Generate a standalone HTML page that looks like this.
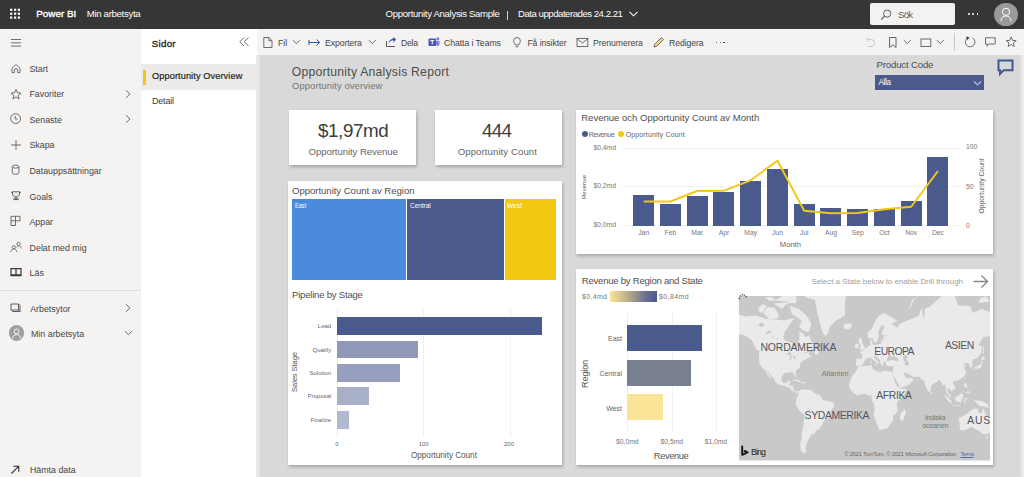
<!DOCTYPE html>
<html><head><meta charset="utf-8">
<style>
*{margin:0;padding:0;box-sizing:border-box}
html,body{width:1024px;height:477px;overflow:hidden;background:#d9d9d9;font-family:"Liberation Sans",sans-serif;position:relative}
.a{position:absolute;display:block}
.t{position:absolute;white-space:nowrap;line-height:1}
.card{position:absolute;background:#fff;box-shadow:1px 2px 3px rgba(0,0,0,.24)}
</style></head><body>

<div class="a" style="left:0px;top:0px;width:1024px;height:29px;background:#363636;"></div>
<svg class="a" style="left:0px;top:0px;" width="30" height="29" viewBox="0 0 30 29"><rect x="10.10" y="8.70" width="2.2" height="2.2" fill="#fff"/><rect x="10.10" y="12.60" width="2.2" height="2.2" fill="#fff"/><rect x="10.10" y="16.50" width="2.2" height="2.2" fill="#fff"/><rect x="14.00" y="8.70" width="2.2" height="2.2" fill="#fff"/><rect x="14.00" y="12.60" width="2.2" height="2.2" fill="#fff"/><rect x="14.00" y="16.50" width="2.2" height="2.2" fill="#fff"/><rect x="17.80" y="8.70" width="2.2" height="2.2" fill="#fff"/><rect x="17.80" y="12.60" width="2.2" height="2.2" fill="#fff"/><rect x="17.80" y="16.50" width="2.2" height="2.2" fill="#fff"/></svg>
<div class="t" style="left:36.30px;top:9.20px;font-size:9.8px;color:#fff;letter-spacing:0.034px;-webkit-text-stroke:0.35px #fff">Power BI</div>
<div class="t" style="left:86.70px;top:9.07px;font-size:9.6px;color:#fff;letter-spacing:-0.302px;">Min arbetsyta</div>
<div class="t" style="left:385.60px;top:9.47px;font-size:9.6px;color:#fff;letter-spacing:-0.320px;">Opportunity Analysis Sample</div>
<div class="a" style="left:506.5px;top:11px;width:1px;height:9px;background:#d0d0d0;"></div>
<div class="t" style="left:518.00px;top:9.47px;font-size:9.6px;color:#fff;letter-spacing:-0.473px;">Data uppdaterades 24.2.21</div>
<svg class="a" style="left:627px;top:9px;" width="13" height="10" viewBox="0 0 13 10"><path d="M2.5 2.8 L6.5 6.8 L10.5 2.8" fill="none" stroke="#fff" stroke-width="1.1"/></svg>
<div class="a" style="left:870px;top:3px;width:85px;height:22px;background:#f3f2f1;border-radius:2px"></div>
<svg class="a" style="left:879px;top:8px;" width="14" height="14" viewBox="0 0 14 14"><circle cx="8.2" cy="5.6" r="3.6" fill="none" stroke="#605e5c" stroke-width="1"/><path d="M5.6 8.2 L2.3 11.5" stroke="#605e5c" stroke-width="1.1"/></svg>
<div class="t" style="left:898.00px;top:10.07px;font-size:9.6px;color:#605e5c;letter-spacing:-0.771px;">Sök</div>
<div class="a" style="left:968.0px;top:13.2px;width:1.6px;height:1.6px;background:#fff;border-radius:1px"></div>
<div class="a" style="left:972.4000000000001px;top:13.2px;width:1.6px;height:1.6px;background:#fff;border-radius:1px"></div>
<div class="a" style="left:976.8000000000001px;top:13.2px;width:1.6px;height:1.6px;background:#fff;border-radius:1px"></div>
<div class="a" style="left:994.3px;top:2.5px;width:23.5px;height:23.5px;border-radius:50%;background:#9a9a9a"></div>
<svg class="a" style="left:994px;top:2px;" width="24" height="24" viewBox="0 0 24 24"><circle cx="12" cy="9.8" r="3.6" fill="none" stroke="#fff" stroke-width="1"/><path d="M6.8 19.2 C7.3 15.5 9.2 14 12 14 C14.8 14 16.7 15.5 17.2 19.2" fill="none" stroke="#fff" stroke-width="1"/></svg>
<div class="a" style="left:0px;top:29px;width:141px;height:448px;background:#f4f3f2;"></div>
<svg class="a" style="left:8px;top:36px;" width="16" height="14" viewBox="0 0 16 14"><path d="M3 3.5 H13 M3 6.8 H13 M3 10.1 H13" stroke="#605e5c" stroke-width="0.9"/></svg>
<div class="t" style="left:29.40px;top:64.50px;font-size:8.85px;color:#464544;">Start</div>
<div class="t" style="left:29.40px;top:90.10px;font-size:8.85px;color:#464544;">Favoriter</div>
<div class="t" style="left:29.40px;top:115.70px;font-size:8.85px;color:#464544;">Senaste</div>
<div class="t" style="left:29.40px;top:141.30px;font-size:8.85px;color:#464544;">Skapa</div>
<div class="t" style="left:29.40px;top:166.90px;font-size:8.85px;color:#464544;">Datauppsättningar</div>
<div class="t" style="left:29.40px;top:192.50px;font-size:8.85px;color:#464544;">Goals</div>
<div class="t" style="left:29.40px;top:218.10px;font-size:8.85px;color:#464544;">Appar</div>
<div class="t" style="left:29.60px;top:243.70px;font-size:8.85px;color:#464544;">Delat med mig</div>
<div class="t" style="left:29.60px;top:269.30px;font-size:8.85px;color:#464544;">Läs</div>
<div class="t" style="left:30.20px;top:305.10px;font-size:8.85px;color:#464544;">Arbetsytor</div>
<div class="t" style="left:31.00px;top:330.30px;font-size:8.85px;color:#464544;">Min arbetsyta</div>
<div class="t" style="left:29.90px;top:466.40px;font-size:8.85px;color:#464544;">Hämta data</div>
<svg class="a" style="left:7px;top:60px;" width="18" height="16" viewBox="0 0 18 16"><path d="M5 8.3 L9 4.4 L13 8.3 V12.6 H10.7 V10.2 A1.7 1.7 0 0 0 7.3 10.2 V12.6 H5 Z" fill="none" stroke="#605e5c" stroke-width="0.9" stroke-linejoin="round"/></svg>
<svg class="a" style="left:7px;top:86px;" width="18" height="16" viewBox="0 0 18 16"><path d="M9 3.4 L10.4 6.8 L13.9 7.1 L11.2 9.4 L12.1 12.9 L9 11 L5.9 12.9 L6.8 9.4 L4.1 7.1 L7.6 6.8 Z" fill="none" stroke="#605e5c" stroke-width="0.9" stroke-linejoin="round"/></svg>
<svg class="a" style="left:7px;top:111px;" width="18" height="16" viewBox="0 0 18 16"><circle cx="8.6" cy="7.6" r="4.9" fill="none" stroke="#605e5c" stroke-width="0.9"/><path d="M8.2 4.9 V8 H10.6" fill="none" stroke="#605e5c" stroke-width="0.9"/></svg>
<svg class="a" style="left:7px;top:137px;" width="18" height="16" viewBox="0 0 18 16"><path d="M9 3.2 V12.8 M4 8 H14" stroke="#605e5c" stroke-width="0.9"/></svg>
<svg class="a" style="left:7px;top:162px;" width="18" height="16" viewBox="0 0 18 16"><ellipse cx="8.6" cy="4.6" rx="3.3" ry="1.5" fill="none" stroke="#605e5c" stroke-width="0.9"/><path d="M5.3 4.6 V10.8 A3.3 1.5 0 0 0 11.9 10.8 V4.6" fill="none" stroke="#605e5c" stroke-width="0.9"/></svg>
<svg class="a" style="left:7px;top:188px;" width="18" height="16" viewBox="0 0 18 16"><path d="M5.5 3.8 H12.5 V5.8 C12.5 8 11 9 9 9 C7 9 5.5 8 5.5 5.8 Z M4 4.3 H5.5 M12.5 4.3 H14 M9 9 V10.2 M6.5 11.6 H11.5 L10.5 10.2 H7.5 Z" fill="none" stroke="#605e5c" stroke-width="1"/></svg>
<svg class="a" style="left:7px;top:214px;" width="18" height="16" viewBox="0 0 18 16"><path d="M4 2.3 H13 V6.8 H8.5 V11.5 H4 Z M4 6.8 H8.5 M8.5 2.3 V6.8" fill="none" stroke="#605e5c" stroke-width="0.9"/></svg>
<svg class="a" style="left:7px;top:239px;" width="18" height="16" viewBox="0 0 18 16"><circle cx="6.8" cy="8.2" r="1.6" fill="none" stroke="#605e5c" stroke-width="0.8"/><path d="M3.8 13 C4 10.8 5.2 10 6.8 10 C8.4 10 9.6 10.8 9.8 13" fill="none" stroke="#605e5c" stroke-width="0.8"/><circle cx="11.5" cy="4.8" r="1.6" fill="none" stroke="#605e5c" stroke-width="0.8"/><path d="M9.8 8.6 C10.2 7.4 10.8 6.8 11.5 6.8 C13 6.8 14 7.6 14.2 9.6" fill="none" stroke="#605e5c" stroke-width="0.8"/></svg>
<svg class="a" style="left:7px;top:265px;" width="18" height="16" viewBox="0 0 18 16"><path d="M4 3.6 H14 V10.6 H4 Z M9 3.6 V10.6 M4 9.8 H14" fill="none" stroke="#3b3a39" stroke-width="1.2"/></svg>
<div class="a" style="left:0px;top:289.5px;width:141px;height:1px;background:#e1dfdd;"></div>
<svg class="a" style="left:7px;top:300px;" width="18" height="16" viewBox="0 0 18 16"><path d="M4 4 H11.5 L13 5.5 V11.5 H5.5 L4 10 Z M4 10 H11.5 V4" fill="none" stroke="#605e5c" stroke-width="1"/><path d="M11.5 10 L13 11.5" stroke="#605e5c" stroke-width="1"/></svg>
<div class="a" style="left:8.8px;top:325.4px;width:15.6px;height:15.6px;border-radius:50%;background:#a19f9d"></div>
<svg class="a" style="left:8px;top:325px;" width="17" height="17" viewBox="0 0 17 17"><circle cx="8.6" cy="6.4" r="2.4" fill="none" stroke="#fff" stroke-width="0.9"/><path d="M4.6 13.4 C4.9 10.8 6.4 9.6 8.6 9.6 C10.8 9.6 12.3 10.8 12.6 13.4" fill="none" stroke="#fff" stroke-width="0.9"/></svg>
<svg class="a" style="left:8px;top:462px;" width="14" height="14" viewBox="0 0 14 14"><path d="M3.5 11.5 L10.8 4.2 M5.2 4.2 H10.8 V9.8" fill="none" stroke="#323130" stroke-width="1.1"/></svg>
<svg class="a" style="left:123px;top:88px;" width="10" height="12" viewBox="0 0 10 12"><path d="M3.2 2.2 L6.8 6 L3.2 9.8" fill="none" stroke="#605e5c" stroke-width="0.9"/></svg>
<svg class="a" style="left:123px;top:113px;" width="10" height="12" viewBox="0 0 10 12"><path d="M3.2 2.2 L6.8 6 L3.2 9.8" fill="none" stroke="#605e5c" stroke-width="0.9"/></svg>
<svg class="a" style="left:123px;top:302px;" width="10" height="12" viewBox="0 0 10 12"><path d="M3.2 2.2 L6.8 6 L3.2 9.8" fill="none" stroke="#605e5c" stroke-width="0.9"/></svg>
<svg class="a" style="left:123px;top:328px;" width="11" height="10" viewBox="0 0 11 10"><path d="M2 3.2 L5.5 6.6 L9 3.2" fill="none" stroke="#605e5c" stroke-width="0.9"/></svg>
<div class="a" style="left:141px;top:29px;width:116px;height:448px;background:#ffffff;"></div>
<div class="t" style="left:151.80px;top:39.00px;font-size:9.8px;color:#252423;letter-spacing:0.230px;-webkit-text-stroke:0.3px #252423">Sidor</div>
<svg class="a" style="left:236px;top:35px;" width="16" height="14" viewBox="0 0 16 14"><path d="M8 2.5 L3.8 6.8 L8 11.1 M12.5 2.5 L8.3 6.8 L12.5 11.1" fill="none" stroke="#605e5c" stroke-width="0.9"/></svg>
<div class="a" style="left:141px;top:64px;width:116px;height:26px;background:#edebe9;"></div>
<div class="a" style="left:142.5px;top:70px;width:3px;height:14.5px;background:#f2c811;"></div>
<div class="t" style="left:152.00px;top:72.21px;font-size:9.2px;color:#252423;letter-spacing:0.102px;-webkit-text-stroke:0.2px #252423">Opportunity Overview</div>
<div class="t" style="left:152.00px;top:97.08px;font-size:9.0px;color:#3b3a39;letter-spacing:-0.202px;">Detail</div>
<div class="a" style="left:257px;top:29px;width:767px;height:26px;background:#f4f3f2;"></div>
<div class="a" style="left:256px;top:55px;width:4px;height:422px;background:#e6e6e6;background:linear-gradient(90deg,#ececec,#e3e3e3)"></div>
<div class="a" style="left:1020px;top:55px;width:4px;height:422px;background:#e8e8e8;background:linear-gradient(90deg,#dfdfdf,#f0f0f0)"></div>
<div class="t" style="left:278.00px;top:38.53px;font-size:8.7px;color:#464544;">Fil</div>
<div class="t" style="left:325.00px;top:38.53px;font-size:8.7px;color:#464544;letter-spacing:-0.090px;">Exportera</div>
<div class="t" style="left:401.00px;top:38.53px;font-size:8.7px;color:#464544;letter-spacing:-0.298px;">Dela</div>
<div class="t" style="left:444.00px;top:38.53px;font-size:8.7px;color:#464544;letter-spacing:-0.067px;">Chatta i Teams</div>
<div class="t" style="left:527.40px;top:38.53px;font-size:8.7px;color:#464544;letter-spacing:-0.083px;">Få insikter</div>
<div class="t" style="left:593.00px;top:38.53px;font-size:8.7px;color:#464544;letter-spacing:-0.077px;">Prenumerera</div>
<div class="t" style="left:669.00px;top:38.53px;font-size:8.7px;color:#464544;letter-spacing:-0.087px;">Redigera</div>
<svg class="a" style="left:262px;top:36px;" width="12" height="13" viewBox="0 0 12 13"><path d="M1.8 1.5 H6.8 L10 4.7 V11.5 H1.8 Z M6.8 1.5 V4.7 H10" fill="none" stroke="#605e5c" stroke-width="0.9" stroke-linejoin="round"/></svg>
<svg class="a" style="left:291.5px;top:38px;" width="9" height="8" viewBox="0 0 9 8"><path d="M0.8 2.2 L4.3 5.6 L7.8 2.2" fill="none" stroke="#605e5c" stroke-width="0.9"/></svg>
<svg class="a" style="left:368px;top:38px;" width="9" height="8" viewBox="0 0 9 8"><path d="M0.8 2.2 L4.3 5.6 L7.8 2.2" fill="none" stroke="#605e5c" stroke-width="0.9"/></svg>
<svg class="a" style="left:308px;top:37px;" width="14" height="11" viewBox="0 0 14 11"><path d="M1 5.5 H11.5 M8.5 2.5 L11.7 5.5 L8.5 8.5 M1 3 V8" fill="none" stroke="#2b579a" stroke-width="1"/></svg>
<svg class="a" style="left:385px;top:36px;" width="12" height="12" viewBox="0 0 12 12"><path d="M1.5 5 V10.5 H10" fill="none" stroke="#605e5c" stroke-width="1"/><path d="M3.5 9 C4 5.5 6 4.2 8.5 4.2 V6.5 L11 3.5 L8.5 0.8 V2.8 C5.5 2.8 3.6 5 3.5 9 Z" fill="#2b579a"/></svg>
<svg class="a" style="left:428px;top:36px;" width="12" height="12" viewBox="0 0 12 12"><rect x="0.5" y="2.5" width="7.5" height="7.5" rx="1" fill="#4b53bc"/><path d="M2.2 4.6 H6.3 M4.25 4.6 V8.4" stroke="#fff" stroke-width="1"/><circle cx="9.8" cy="2.8" r="1.6" fill="#7b83eb"/><path d="M8 5 H11.5 V8.5 A1.8 1.8 0 0 1 8 8.5 Z" fill="#7b83eb"/></svg>
<svg class="a" style="left:512px;top:36px;" width="10" height="13" viewBox="0 0 10 13"><path d="M5 1.5 A3.4 3.4 0 0 1 8.4 4.9 C8.4 6.6 7 7.4 6.6 9 H3.4 C3 7.4 1.6 6.6 1.6 4.9 A3.4 3.4 0 0 1 5 1.5 Z M3.6 10.8 H6.4" fill="none" stroke="#605e5c" stroke-width="0.9"/></svg>
<svg class="a" style="left:576px;top:37px;" width="13" height="11" viewBox="0 0 13 11"><rect x="1" y="1.5" width="10.8" height="8" fill="none" stroke="#605e5c" stroke-width="0.9"/><path d="M1 1.8 L6.4 6 L11.8 1.8" fill="none" stroke="#605e5c" stroke-width="0.9"/></svg>
<svg class="a" style="left:652px;top:36px;" width="13" height="13" viewBox="0 0 13 13"><path d="M2 11 L2.6 8.4 L9.4 1.6 L11.4 3.6 L4.6 10.4 Z" fill="#f3d57a" stroke="#605e5c" stroke-width="0.9" stroke-linejoin="round"/></svg>
<div class="a" style="left:715.8px;top:41.6px;width:1.4px;height:1.4px;background:#323130;border-radius:1px"></div>
<div class="a" style="left:719.5999999999999px;top:41.6px;width:1.4px;height:1.4px;background:#323130;border-radius:1px"></div>
<div class="a" style="left:723.4px;top:41.6px;width:1.4px;height:1.4px;background:#323130;border-radius:1px"></div>
<svg class="a" style="left:863px;top:36px;" width="14" height="12" viewBox="0 0 14 12"><path d="M3.8 3.4 H8 A3.6 3.6 0 0 1 8 10.6 H4.5 M5.6 1.2 L3.4 3.4 L5.6 5.6" fill="none" stroke="#c8c6c4" stroke-width="0.9"/></svg>
<svg class="a" style="left:888px;top:36px;" width="10" height="13" viewBox="0 0 10 13"><path d="M1.6 1.5 H8 V11.5 L4.8 8.8 L1.6 11.5 Z" fill="none" stroke="#605e5c" stroke-width="1"/></svg>
<svg class="a" style="left:920px;top:37px;" width="12" height="11" viewBox="0 0 12 11"><rect x="1" y="2" width="9.8" height="7.5" fill="none" stroke="#605e5c" stroke-width="0.9"/></svg>
<svg class="a" style="left:902.5px;top:38px;" width="9" height="8" viewBox="0 0 9 8"><path d="M0.8 2.2 L4.3 5.6 L7.8 2.2" fill="none" stroke="#605e5c" stroke-width="0.9"/></svg>
<svg class="a" style="left:935.5px;top:38px;" width="9" height="8" viewBox="0 0 9 8"><path d="M0.8 2.2 L4.3 5.6 L7.8 2.2" fill="none" stroke="#605e5c" stroke-width="0.9"/></svg>
<div class="a" style="left:954px;top:33px;width:1px;height:18px;background:#c8c6c4;"></div>
<svg class="a" style="left:963px;top:36px;" width="14" height="13" viewBox="0 0 14 13"><path d="M9.6 1.9 A4.8 4.8 0 1 1 4.8 1.9" fill="none" stroke="#605e5c" stroke-width="0.9"/><path d="M3.2 0.6 L6.6 1.6 L4 3.9 Z" fill="#323130"/></svg>
<svg class="a" style="left:984px;top:36px;" width="13" height="12" viewBox="0 0 13 12"><path d="M1.5 1.8 H11.2 V8 H5 L3 10.2 V8 H1.5 Z" fill="none" stroke="#605e5c" stroke-width="0.9" stroke-linejoin="round"/></svg>
<svg class="a" style="left:1005px;top:36px;" width="13" height="12" viewBox="0 0 13 12"><path d="M6.2 1 L7.6 4.4 L11.2 4.6 L8.4 6.9 L9.3 10.5 L6.2 8.5 L3.1 10.5 L4 6.9 L1.2 4.6 L4.8 4.4 Z" fill="none" stroke="#605e5c" stroke-width="0.9" stroke-linejoin="round"/></svg>
<div class="t" style="left:291.70px;top:65.67px;font-size:12.2px;color:#4d4d4d;letter-spacing:0.234px;">Opportunity Analysis Report</div>
<div class="t" style="left:292.00px;top:80.64px;font-size:9.4px;color:#747474;letter-spacing:0.116px;">Opportunity overview</div>
<div class="t" style="left:876.50px;top:59.67px;font-size:9.6px;color:#4d4d4d;letter-spacing:-0.155px;">Product Code</div>
<div class="a" style="left:875px;top:75px;width:109px;height:15px;background:#4a5a8c;"></div>
<div class="t" style="left:878.40px;top:79.35px;font-size:8.2px;color:#ffffff;letter-spacing:-0.358px;">Alla</div>
<svg class="a" style="left:972px;top:79px;" width="11" height="8" viewBox="0 0 11 8"><path d="M1.8 2.4 L5.5 5.8 L9.2 2.4" fill="none" stroke="#fff" stroke-width="1"/></svg>
<svg class="a" style="left:996px;top:58px;" width="19" height="19" viewBox="0 0 19 19"><path d="M2.5 2.5 H16.5 V12.2 H7.5 L4 16 V12.2 H2.5 Z" fill="none" stroke="#3f5795" stroke-width="2" stroke-linejoin="miter"/></svg>
<div class="card" style="left:289px;top:110px;width:127px;height:55px"></div>
<div class="card" style="left:435px;top:110px;width:127px;height:55px"></div>
<div class="t" style="left:318.00px;top:122.28px;font-size:18.8px;color:#3c3c3c;letter-spacing:-0.394px;">$1,97md</div>
<div class="t" style="left:308.50px;top:146.87px;font-size:9.6px;color:#666666;letter-spacing:-0.068px;">Opportunity Revenue</div>
<div class="t" style="left:482.00px;top:122.28px;font-size:18.8px;color:#3c3c3c;letter-spacing:-0.684px;">444</div>
<div class="t" style="left:457.70px;top:146.87px;font-size:9.6px;color:#666666;letter-spacing:0.087px;">Opportunity Count</div>
<div class="card" style="left:288px;top:181px;width:274px;height:284px"></div>
<div class="t" style="left:292.00px;top:185.67px;font-size:9.6px;color:#505050;letter-spacing:-0.046px;">Opportunity Count av Region</div>
<div class="a" style="left:292px;top:199px;width:114px;height:81px;background:#4a8bdb;"></div>
<div class="a" style="left:407px;top:199px;width:97px;height:81px;background:#4a5a8c;"></div>
<div class="a" style="left:505px;top:199px;width:51px;height:81px;background:#f2c811;"></div>
<div class="t" style="left:295.20px;top:203.49px;font-size:6.5px;color:#ffffff;transform:scaleX(0.8611);transform-origin:0 0;">East</div>
<div class="t" style="left:409.60px;top:203.49px;font-size:6.5px;color:#ffffff;transform:scaleX(0.9879);transform-origin:0 0;">Central</div>
<div class="t" style="left:506.60px;top:203.49px;font-size:6.5px;color:#ffffff;transform:scaleX(1.0008);transform-origin:0 0;">West</div>
<div class="t" style="left:292.00px;top:290.27px;font-size:9.6px;color:#505050;letter-spacing:-0.232px;">Pipeline by Stage</div>
<div class="a" style="left:336.5px;top:309px;width:0;height:128px;border-left:1px dotted #e4e4e4"></div>
<div class="a" style="left:423.0px;top:309px;width:0;height:128px;border-left:1px dotted #e4e4e4"></div>
<div class="a" style="left:509.5px;top:309px;width:0;height:128px;border-left:1px dotted #e4e4e4"></div>
<div class="a" style="left:337px;top:317.3px;width:205.2px;height:17.7px;background:#4a5a8c"></div>
<div class="t" style="left:317.85px;top:323.27px;font-size:6.0px;color:#666666;">Lead</div>
<div class="a" style="left:337px;top:340.8px;width:80.5px;height:17.4px;background:#8f98b8"></div>
<div class="t" style="left:312.53px;top:346.62px;font-size:6.0px;color:#666666;">Qualify</div>
<div class="a" style="left:337px;top:363.9px;width:63.0px;height:17.7px;background:#969fbd"></div>
<div class="t" style="left:309.52px;top:369.87px;font-size:6.0px;color:#666666;">Solution</div>
<div class="a" style="left:337px;top:387.4px;width:31.7px;height:17.5px;background:#a8afc9"></div>
<div class="t" style="left:307.52px;top:393.27px;font-size:6.0px;color:#666666;">Proposal</div>
<div class="a" style="left:337px;top:410.5px;width:11.7px;height:18.3px;background:#b1b8d0"></div>
<div class="t" style="left:310.53px;top:416.77px;font-size:6.0px;color:#666666;">Finalize</div>
<div class="t" style="left:335.36px;top:442.00px;font-size:5.9px;color:#666666;">0</div>
<div class="t" style="left:418.68px;top:442.00px;font-size:5.9px;color:#666666;">100</div>
<div class="t" style="left:504.08px;top:442.00px;font-size:5.9px;color:#666666;">200</div>
<div class="t" style="left:411.00px;top:452.25px;font-size:8.2px;color:#555555;letter-spacing:-0.034px;">Opportunity Count</div>
<div class="t" style="left:295px;top:372px;font-size:7.6px;color:#555;letter-spacing:-0.1px;transform:translate(-50%,-50%) rotate(-90deg);transform-origin:center">Sales Stage</div>
<div class="card" style="left:576px;top:110px;width:417px;height:144px"></div>
<div class="t" style="left:581.20px;top:112.67px;font-size:9.6px;color:#505050;letter-spacing:-0.030px;">Revenue och Opportunity Count av Month</div>
<div class="a" style="left:581.6px;top:131.2px;width:6px;height:6px;border-radius:50%;background:#4a5a8c"></div>
<div class="t" style="left:588.80px;top:130.57px;font-size:7.0px;color:#666666;letter-spacing:-0.337px;">Revenue</div>
<div class="a" style="left:618.2px;top:131.2px;width:6px;height:6px;border-radius:50%;background:#f2c811"></div>
<div class="t" style="left:625.70px;top:130.57px;font-size:7.0px;color:#666666;letter-spacing:0.137px;">Opportunity Count</div>
<div class="t" style="left:593.50px;top:144.74px;font-size:6.8px;color:#777777;letter-spacing:-0.036px;">$0,4md</div>
<div class="a" style="left:622px;top:147.5px;width:337px;height:0;border-top:1px dotted #e2e2e2"></div>
<div class="t" style="left:593.50px;top:183.44px;font-size:6.8px;color:#777777;letter-spacing:-0.036px;">$0,2md</div>
<div class="a" style="left:622px;top:186.2px;width:337px;height:0;border-top:1px dotted #e2e2e2"></div>
<div class="t" style="left:593.50px;top:222.34px;font-size:6.8px;color:#777777;letter-spacing:-0.036px;">$0,0md</div>
<div class="a" style="left:622px;top:225.1px;width:337px;height:0;border-top:1px dotted #e2e2e2"></div>
<div class="t" style="left:966.00px;top:144.14px;font-size:6.8px;color:#777777;">100</div>
<div class="t" style="left:966.00px;top:184.04px;font-size:6.8px;color:#777777;">50</div>
<div class="t" style="left:966.00px;top:222.74px;font-size:6.8px;color:#777777;">0</div>
<div class="t" style="left:584px;top:187px;font-size:6.0px;color:#555;transform:translate(-50%,-50%) rotate(-90deg)">Revenue</div>
<div class="t" style="left:982px;top:186.4px;font-size:6.8px;color:#555;transform:translate(-50%,-50%) rotate(-90deg)">Opportunity Count</div>
<div class="a" style="left:633.20px;top:194.8px;width:21px;height:31.0px;background:#4a5a8c"></div>
<div class="t" style="left:638.22px;top:229.64px;font-size:6.8px;color:#777777;">Jan</div>
<div class="a" style="left:659.95px;top:204.3px;width:21px;height:21.5px;background:#4a5a8c"></div>
<div class="t" style="left:664.59px;top:229.64px;font-size:6.8px;color:#777777;">Feb</div>
<div class="a" style="left:686.70px;top:195.6px;width:21px;height:30.2px;background:#4a5a8c"></div>
<div class="t" style="left:691.34px;top:229.64px;font-size:6.8px;color:#777777;">Mar</div>
<div class="a" style="left:713.45px;top:191.9px;width:21px;height:33.9px;background:#4a5a8c"></div>
<div class="t" style="left:718.66px;top:229.64px;font-size:6.8px;color:#777777;">Apr</div>
<div class="a" style="left:740.20px;top:180.8px;width:21px;height:45.0px;background:#4a5a8c"></div>
<div class="t" style="left:744.28px;top:229.64px;font-size:6.8px;color:#777777;">May</div>
<div class="a" style="left:766.95px;top:169.3px;width:21px;height:56.5px;background:#4a5a8c"></div>
<div class="t" style="left:771.97px;top:229.64px;font-size:6.8px;color:#777777;">Jun</div>
<div class="a" style="left:793.70px;top:203.9px;width:21px;height:21.9px;background:#4a5a8c"></div>
<div class="t" style="left:799.85px;top:229.64px;font-size:6.8px;color:#777777;">Jul</div>
<div class="a" style="left:820.45px;top:207.5px;width:21px;height:18.3px;background:#4a5a8c"></div>
<div class="t" style="left:824.90px;top:229.64px;font-size:6.8px;color:#777777;">Aug</div>
<div class="a" style="left:847.20px;top:208.7px;width:21px;height:17.1px;background:#4a5a8c"></div>
<div class="t" style="left:851.65px;top:229.64px;font-size:6.8px;color:#777777;">Sep</div>
<div class="a" style="left:873.95px;top:209.3px;width:21px;height:16.5px;background:#4a5a8c"></div>
<div class="t" style="left:879.16px;top:229.64px;font-size:6.8px;color:#777777;">Oct</div>
<div class="a" style="left:900.70px;top:200.5px;width:21px;height:25.3px;background:#4a5a8c"></div>
<div class="t" style="left:905.15px;top:229.64px;font-size:6.8px;color:#777777;">Nov</div>
<div class="a" style="left:927.45px;top:156.5px;width:21px;height:69.3px;background:#4a5a8c"></div>
<div class="t" style="left:931.90px;top:229.64px;font-size:6.8px;color:#777777;">Dec</div>
<svg class="a" style="left:576px;top:110px;" width="417" height="144" viewBox="0 0 417 144"><polyline points="67.7,91.5 94.5,91.5 121.2,81.0 148.0,80.7 174.7,70.3 201.5,50.7 228.2,100.8 255.0,103.3 281.7,103.0 308.5,99.3 335.2,96.8 362.0,61.0" fill="none" stroke="#f2c811" stroke-width="1.9" stroke-linejoin="round"/></svg>
<div class="t" style="left:779.84px;top:240.56px;font-size:7.6px;color:#666666;">Month</div>
<div class="card" style="left:576px;top:269px;width:417px;height:196px"></div>
<div class="t" style="left:581.80px;top:276.17px;font-size:9.6px;color:#505050;letter-spacing:-0.265px;">Revenue by Region and State</div>
<div class="t" style="left:582.00px;top:293.07px;font-size:7.0px;color:#777777;letter-spacing:0.330px;">$0,4md</div>
<div class="a" style="left:609.7px;top:291.2px;width:47.3px;height:11px;background:linear-gradient(90deg,#fbe49a,#b9a98a 40%,#6a7196 75%,#4a5a8c)"></div>
<div class="t" style="left:659.00px;top:293.07px;font-size:7.0px;color:#777777;letter-spacing:0.393px;">$0,84md</div>
<div class="a" style="left:626.8px;top:313px;width:0;height:118px;border-left:1px dotted #e4e4e4"></div>
<div class="a" style="left:671.5px;top:313px;width:0;height:118px;border-left:1px dotted #e4e4e4"></div>
<div class="a" style="left:715.8px;top:313px;width:0;height:118px;border-left:1px dotted #e4e4e4"></div>
<div class="a" style="left:627.3px;top:324.8px;width:74.5px;height:25.9px;background:#4a5a8c"></div>
<div class="t" style="left:607.99px;top:335.25px;font-size:7.0px;color:#666666;">East</div>
<div class="a" style="left:627.3px;top:359.6px;width:64.2px;height:26.1px;background:#79808f"></div>
<div class="t" style="left:599.43px;top:370.12px;font-size:7.0px;color:#666666;">Central</div>
<div class="a" style="left:627.3px;top:394px;width:35.7px;height:26.4px;background:#f9e498"></div>
<div class="t" style="left:606.18px;top:404.67px;font-size:7.0px;color:#666666;">West</div>
<div class="t" style="left:616.05px;top:439.24px;font-size:6.8px;color:#777777;letter-spacing:-0.036px;">$0,0md</div>
<div class="t" style="left:660.55px;top:439.24px;font-size:6.8px;color:#777777;letter-spacing:-0.036px;">$0,5md</div>
<div class="t" style="left:704.65px;top:439.24px;font-size:6.8px;color:#777777;letter-spacing:-0.036px;">$1,0md</div>
<div class="t" style="left:653.80px;top:450.64px;font-size:9.4px;color:#555555;letter-spacing:-0.438px;">Revenue</div>
<div class="t" style="left:585.8px;top:373.9px;font-size:9.2px;color:#555;letter-spacing:-0.2px;transform:translate(-50%,-50%) rotate(-90deg)">Region</div>
<div class="t" style="left:811.40px;top:277.82px;font-size:8.0px;color:#a0a0a0;letter-spacing:-0.042px;">Select a State below to enable Drill through</div>
<svg class="a" style="left:972px;top:273px;" width="18" height="17" viewBox="0 0 18 17"><path d="M1.5 8.5 H15.5 M9.5 2.5 L15.5 8.5 L9.5 14.5" fill="none" stroke="#8a8886" stroke-width="1.4"/></svg>
<svg class="a" style="left:738.7px;top:296px;overflow:hidden" width="251.1" height="164.5" viewBox="0 0 251.1 164.5"><rect width="251.1" height="164.5" fill="#c9c9c9"/><polygon points="-16.6,29.3 -14.1,24.2 -6.5,16.2 6.1,20.5 17.0,19.5 27.9,23.1 44.7,24.2 50.6,23.1 56.0,21.9 53.9,24.2 51.4,27.5 48.9,31.5 45.5,36.2 44.3,40.5 45.1,43.7 48.1,45.5 52.3,46.6 55.2,47.8 56.9,51.7 58.3,51.0 58.6,47.5 60.2,43.7 60.7,38.8 59.8,35.3 64.0,37.1 66.1,41.3 69.9,39.3 72.8,46.0 77.5,51.4 76.6,52.4 68.6,54.4 64.9,58.4 69.9,55.7 70.3,59.2 73.3,60.0 69.1,62.0 65.3,64.3 62.3,65.6 61.1,68.5 60.7,71.6 56.5,75.1 57.3,81.0 55.9,80.6 54.8,77.5 53.5,76.6 49.7,76.4 45.5,77.1 42.6,80.4 42.3,84.1 44.3,87.0 48.1,87.0 48.5,85.0 51.4,84.5 50.4,89.4 54.5,90.3 54.4,93.7 56.0,95.4 58.1,95.0 59.6,95.8 58.6,96.7 56.9,96.9 55.6,96.1 52.4,94.6 51.0,92.0 47.2,90.7 45.1,89.4 43.0,89.6 39.2,88.3 36.0,85.9 35.9,83.6 32.9,80.8 29.8,76.8 28.2,74.9 28.7,76.6 30.4,79.4 32.5,83.0 30.4,81.8 28.5,79.0 27.5,76.6 26.1,74.1 23.2,72.0 21.6,69.0 20.0,65.9 20.3,59.0 19.8,56.4 21.2,55.7 17.4,53.3 14.9,48.2 12.4,43.7 9.0,41.6 6.1,39.7 1.4,38.3 -2.3,40.5 -4.9,43.7 -8.2,45.2 -12.4,47.5 -7.8,41.8 -11.6,42.0 -13.7,38.8 -14.1,35.3 -10.7,31.5 -14.9,30.9" fill="#eaeaea"/><polygon points="59.4,95.8 61.1,94.1 64.0,92.9 67.4,94.1 72.4,94.1 76.6,98.0 80.8,98.8 82.5,101.7 83.8,103.8 87.5,105.1 91.7,105.5 95.1,107.6 95.1,110.6 91.7,114.4 91.3,118.4 90.1,121.9 87.1,122.8 84.2,125.6 83.5,128.0 80.0,133.4 76.6,134.4 75.8,138.1 72.4,138.6 69.9,142.5 67.8,147.2 66.5,152.9 67.0,155.7 64.9,157.8 61.9,154.3 61.1,147.8 62.8,141.9 62.8,136.5 64.4,129.4 65.4,118.8 60.7,114.9 56.5,108.0 57.3,104.7 57.3,102.2 59.4,99.6" fill="#eaeaea"/><polygon points="109.8,90.5 110.6,86.3 113.6,79.0 116.5,76.1 119.5,70.8 127.0,69.7 132.9,69.3 133.7,73.1 137.5,75.1 141.3,76.1 145.5,74.8 151.4,75.4 153.5,77.1 155.6,85.0 157.7,89.8 160.9,92.4 167.5,93.0 167.3,94.1 164.8,99.2 159.8,103.8 157.5,108.0 158.5,112.3 158.5,115.7 153.9,120.1 154.3,123.8 151.8,128.0 148.0,132.4 143.0,133.4 140.0,133.8 139.2,129.4 137.1,126.6 134.6,118.4 135.8,112.3 134.6,107.6 132.5,103.0 132.5,99.6 129.5,99.4 126.2,97.7 121.1,98.6 118.2,99.4 114.8,97.3 111.9,93.9" fill="#eaeaea"/><polygon points="119.8,70.6 122.8,69.7 124.5,67.4 127.0,62.6 132.1,61.4 133.3,62.9 135.0,64.6 137.5,66.3 137.9,68.5 138.8,67.4 140.0,66.1 137.9,64.6 135.8,62.4 134.8,60.2 136.0,59.8 140.9,64.1 141.3,66.9 143.4,70.0 144.7,68.5 143.8,65.8 146.8,65.8 147.2,69.5 149.7,70.3 154.7,70.0 153.9,74.1 153.2,75.6 153.5,77.1 153.9,78.5 157.3,84.5 160.2,89.4 161.0,92.2 168.2,89.4 170.7,88.3 174.7,83.6 172.0,81.8 167.8,82.2 166.9,81.3 164.8,77.1 166.5,76.6 172.0,79.4 173.2,80.8 180.4,80.8 182.0,82.7 185.4,85.0 186.2,89.4 189.6,96.3 191.7,94.6 192.0,89.8 197.2,85.9 200.9,83.6 203.9,89.4 206.4,89.0 207.2,96.3 208.9,98.8 211.4,101.9 211.9,101.3 211.0,98.8 209.3,97.1 208.5,95.4 208.9,91.6 210.6,92.9 212.7,95.7 214.4,94.1 216.1,93.3 216.1,90.3 214.0,87.6 213.5,85.9 215.6,84.5 216.9,85.0 220.3,83.8 224.9,80.8 227.0,77.5 226.6,74.6 224.5,71.6 227.4,69.5 223.6,67.9 226.6,67.4 229.5,66.9 230.3,69.0 230.8,72.1 232.9,71.1 233.7,63.5 237.9,62.4 242.1,56.9 242.9,50.3 239.6,48.9 244.6,40.8 250.5,40.5 255.1,44.5 255.5,53.1 260.6,47.5 261.4,42.9 267.3,39.7 273.2,35.3 275.7,30.5 275.7,21.9 267.3,19.5 258.9,20.3 250.5,15.7 242.1,13.0 233.7,17.0 231.2,10.1 219.4,9.5 215.2,-1.5 208.5,-9.6 204.3,-1.5 198.4,3.8 191.7,10.1 185.8,13.0 185.0,24.2 182.5,11.6 179.9,19.5 174.9,21.9 169.0,24.2 161.5,27.5 158.1,31.5 152.2,27.5 158.9,25.3 149.7,19.5 145.5,17.0 139.6,20.0 136.3,25.3 132.9,32.5 128.7,36.2 128.7,41.3 131.2,42.9 133.7,42.1 135.4,46.7 138.4,45.2 140.0,39.7 139.2,35.3 143.0,28.9 145.5,30.5 142.6,37.1 143.4,39.0 149.7,39.7 144.2,40.5 144.7,43.7 142.6,43.7 142.1,47.5 136.3,48.9 133.3,48.2 133.3,43.4 131.2,44.5 131.6,48.9 128.3,51.0 126.2,53.1 120.7,56.3 123.2,58.8 123.2,62.4 116.9,62.9 116.9,69.5" fill="#eaeaea"/><polygon points="87.5,39.7 89.2,36.2 90.9,30.5 97.6,24.2 106.0,19.5 106.0,5.5 109.4,-14.2 63.2,-14.2 63.2,-1.5 68.2,2.1 75.8,3.8 78.3,17.0 80.8,26.4 82.5,32.5 84.2,37.9" fill="#eaeaea"/><polygon points="104.3,29.5 106.0,27.7 111.9,27.5 113.2,30.5 109.4,33.6 105.6,32.9" fill="#eaeaea"/><polygon points="119.9,54.4 125.8,53.1 125.9,50.8 124.5,49.6 123.2,46.7 122.8,43.4 122.0,42.0 120.3,42.0 119.5,45.2 120.5,47.8 122.0,49.8 120.3,52.1 122.0,52.5" fill="#eaeaea"/><polygon points="119.5,51.4 119.5,48.2 118.2,47.2 116.1,48.9 115.9,52.0 117.8,52.4" fill="#eaeaea"/><polygon points="234.5,72.6 237.9,73.1 242.1,71.6 242.9,67.9 243.4,65.0 242.1,65.8 241.7,68.5 239.2,69.5 236.2,71.1 234.5,71.9" fill="#eaeaea"/><polygon points="242.1,64.6 246.7,62.6 243.8,60.0 241.9,63.5" fill="#eaeaea"/><polygon points="233.7,75.1 235.2,73.1 233.5,73.1" fill="#eaeaea"/><polygon points="243.8,59.4 245.0,55.7 244.2,48.6 243.8,53.1" fill="#eaeaea"/><polygon points="225.7,83.6 226.8,81.3 225.3,82.7" fill="#eaeaea"/><polygon points="215.8,87.2 217.7,86.0 216.9,85.8" fill="#eaeaea"/><polygon points="225.3,87.2 227.0,87.2 228.7,92.0 225.7,91.1 225.1,89.4" fill="#eaeaea"/><polygon points="227.0,97.1 230.8,97.1 229.9,95.0 227.8,95.8" fill="#eaeaea"/><polygon points="216.1,101.7 217.7,100.5 222.4,97.1 224.5,98.8 223.6,102.2 221.9,106.4 217.3,105.5 216.1,103.4" fill="#eaeaea"/><polygon points="204.6,98.3 207.2,100.1 211.9,104.3 213.5,107.9 209.3,105.5 207.2,102.2" fill="#eaeaea"/><polygon points="213.1,108.7 220.7,109.6 220.7,110.3 213.5,109.3" fill="#eaeaea"/><polygon points="224.9,107.6 225.7,102.2 229.5,101.7 226.6,103.8 226.1,107.2" fill="#eaeaea"/><polygon points="234.5,103.8 242.9,105.2 248.4,108.0 250.5,111.9 245.0,110.6 240.4,110.0 237.1,105.9" fill="#eaeaea"/><polygon points="191.5,94.7 193.2,96.7 192.5,98.0 191.7,97.8" fill="#eaeaea"/><polygon points="219.8,121.9 220.3,125.6 221.1,133.4 223.6,134.4 228.2,133.2 232.9,131.1 237.9,134.1 240.4,134.9 242.9,137.7 247.6,138.6 250.5,137.0 253.5,128.0 253.0,124.7 247.1,119.3 244.2,112.0 243.4,115.7 241.7,117.9 238.7,115.7 239.6,113.1 234.5,112.7 231.2,114.9 227.0,118.4 220.3,121.8" fill="#eaeaea"/><polygon points="246.3,140.6 249.1,140.8 247.6,143.6" fill="#eaeaea"/><polygon points="165.9,113.1 166.9,116.2 164.0,124.7 161.5,124.7 161.0,121.0 161.9,117.0" fill="#eaeaea"/><polygon points="53.2,84.2 56.5,83.1 61.1,84.8 62.2,85.7 59.2,85.9 56.9,84.4 53.9,84.7" fill="#eaeaea"/><polygon points="62.0,87.2 67.0,87.1 65.8,85.9 63.3,85.9" fill="#eaeaea"/><polygon points="74.7,57.4 77.9,52.4 80.0,57.6 77.9,58.4" fill="#eaeaea"/><polygon points="69.9,36.2 72.4,27.5 67.4,19.5 59.8,13.0 50.6,10.1 53.1,18.3 57.3,20.7 63.2,25.3 59.8,30.5 64.0,34.4" fill="#eaeaea"/><polygon points="25.4,18.3 30.4,23.1 39.7,22.4 39.7,18.3 35.5,11.6 28.7,11.0 24.5,15.7" fill="#eaeaea"/><polygon points="19.5,14.9 22.9,17.0 27.9,10.1 23.7,8.0 19.5,11.6" fill="#eaeaea"/><polygon points="43.0,13.0 46.4,8.6 57.3,7.1 57.3,0.4 44.7,-1.5 40.5,2.1 36.3,3.8 32.1,0.4 26.2,2.1" fill="#eaeaea"/><polygon points="168.2,15.7 170.7,11.6 173.2,3.8 181.6,-1.5 174.9,3.8 171.5,11.6" fill="#eaeaea"/><polygon points="239.6,7.1 250.5,5.5 247.1,0.4 241.3,2.1" fill="#eaeaea"/><polygon points="135.0,68.5 137.6,68.1 137.1,69.8" fill="#eaeaea"/><polygon points="131.4,67.4 132.6,67.2 132.5,65.0 131.4,65.3" fill="#eaeaea"/><polygon points="144.2,71.3 146.6,71.4 144.7,71.0" fill="#eaeaea"/><polygon points="148.0,64.9 148.9,65.2 152.2,64.1 159.4,64.9 158.9,62.4 156.0,60.6 153.9,60.0 151.8,61.2 152.6,59.4 149.7,58.8 148.4,62.4" fill="#c9c9c9"/><polygon points="164.0,60.6 166.5,58.8 169.0,60.6 167.3,64.1 169.9,66.3 169.4,69.5 165.7,69.0 166.1,65.8 164.4,63.5" fill="#c9c9c9"/><polygon points="47.2,58.6 50.6,55.9 53.3,58.4 51.0,58.8" fill="#c9c9c9"/><polygon points="50.7,64.1 51.4,59.6 53.1,59.6 51.8,63.5" fill="#c9c9c9"/><polygon points="53.9,59.4 56.9,60.6 55.6,62.9 54.4,61.8" fill="#c9c9c9"/><polygon points="54.4,64.4 58.1,63.2 56.5,63.5" fill="#c9c9c9"/><polygon points="19.5,30.1 21.2,26.4 24.5,27.5 25.0,29.9 22.4,30.7" fill="#c9c9c9"/><polygon points="26.2,38.1 28.7,35.3 32.9,34.7 31.3,37.1 27.9,38.3" fill="#c9c9c9"/><polygon points="30.8,41.6 35.5,40.3 34.6,41.5" fill="#c9c9c9"/><polygon points="37.1,43.7 38.4,42.0 39.0,43.2" fill="#c9c9c9"/><polygon points="41.3,53.7 41.8,49.6 43.0,48.9 43.4,52.4" fill="#c9c9c9"/><polygon points="37.1,21.9 43.9,24.7 43.0,21.5" fill="#c9c9c9"/><polygon points="50.6,8.0 57.3,9.8 57.3,7.7 46.4,6.4 32.1,7.7 22.0,6.8 22.0,5.1 36.3,4.5 48.9,5.8" fill="#c9c9c9"/></svg>
<div class="t" style="left:760.50px;top:343.19px;font-size:10.4px;color:#555560;letter-spacing:-0.133px;">NORDAMERIKA</div>
<div class="t" style="left:874.30px;top:346.69px;font-size:10.4px;color:#555560;letter-spacing:-0.590px;">EUROPA</div>
<div class="t" style="left:944.90px;top:340.69px;font-size:10.4px;color:#555560;letter-spacing:-0.453px;">ASIEN</div>
<div class="t" style="left:876.30px;top:391.49px;font-size:10.4px;color:#555560;letter-spacing:-0.373px;">AFRIKA</div>
<div class="t" style="left:804.60px;top:410.89px;font-size:10.4px;color:#555560;letter-spacing:-0.355px;">SYDAMERIKA</div>
<div class="t" style="left:821.80px;top:370.37px;font-size:7.0px;color:#777;letter-spacing:0.116px;">Atlanten</div>
<div class="t" style="left:924.90px;top:414.27px;font-size:7.0px;color:#777;letter-spacing:-0.230px;">Indiska</div>
<div class="t" style="left:922.30px;top:421.57px;font-size:7.0px;color:#777;letter-spacing:-0.143px;">oceanen</div>
<div class="t" style="left:967.20px;top:416.19px;font-size:10.4px;color:#555560;letter-spacing:0.808px;">AUS</div>
<svg class="a" style="left:738px;top:445px;" width="14" height="14" viewBox="0 0 14 14"><path d="M4.2 1.6 V9.8 L9.6 7.4 L6.6 6" fill="none" stroke="#1a1a1a" stroke-width="2" stroke-linejoin="round" stroke-linecap="round"/></svg>
<div class="t" style="left:750.90px;top:447.55px;font-size:8.8px;color:#222;letter-spacing:-0.838px;">Bing</div>
<div class="t" style="left:844.40px;top:452.16px;font-size:5.6px;color:#666;letter-spacing:-0.121px;">© 2021 TomTom, © 2021 Microsoft Corporation</div>
<div class="t" style="left:960.50px;top:452.16px;font-size:5.6px;color:#4a6fb0;letter-spacing:-0.436px;text-decoration:underline">Terms</div>
<svg class="a" style="left:736px;top:292px;" width="12" height="9" viewBox="0 0 12 9"><circle cx="3.1" cy="6.6" r="0.75" fill="#444"/><circle cx="4.3" cy="4.1" r="0.75" fill="#444"/><circle cx="6.3" cy="2.8" r="0.75" fill="#444"/><circle cx="8.3" cy="3.3" r="0.75" fill="#444"/><circle cx="10.1" cy="4.8" r="0.75" fill="#444"/></svg>
</body></html>
